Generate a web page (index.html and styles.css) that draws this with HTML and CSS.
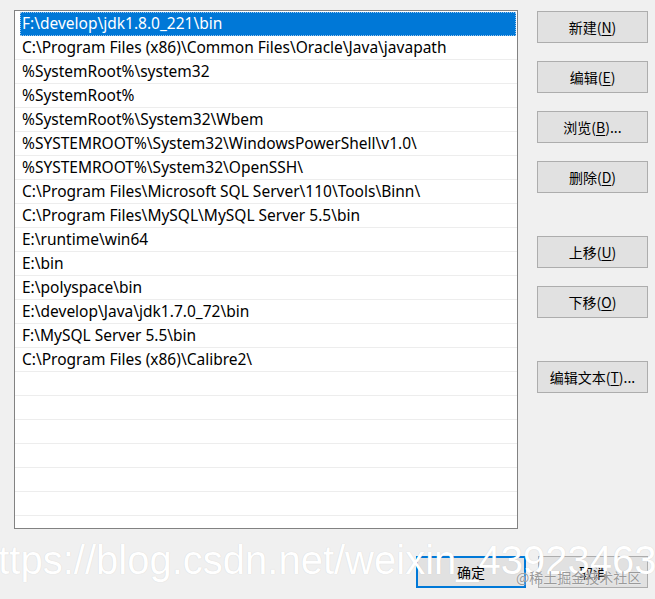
FILE: index.html
```html
<!DOCTYPE html>
<html lang="zh-CN">
  <head>
    <meta charset="UTF-8" />
    <title>编辑环境变量</title>
    <link rel="stylesheet" href="styles.css">
  </head>
  <body>
    <div class="dialog">
      <div class="main">
        <div class="path-list">
          <div class="path-item selected">F:\develop\jdk1.8.0_221\bin</div>
          <div class="path-item">C:\Program Files (x86)\Common Files\Oracle\Java\javapath</div>
          <div class="path-item">%SystemRoot%\system32</div>
          <div class="path-item">%SystemRoot%</div>
          <div class="path-item">%SystemRoot%\System32\Wbem</div>
          <div class="path-item">%SYSTEMROOT%\System32\WindowsPowerShell\v1.0\</div>
          <div class="path-item">%SYSTEMROOT%\System32\OpenSSH\</div>
          <div class="path-item">C:\Program Files\Microsoft SQL Server\110\Tools\Binn\</div>
          <div class="path-item">C:\Program Files\MySQL\MySQL Server 5.5\bin</div>
          <div class="path-item">E:\runtime\win64</div>
          <div class="path-item">E:\bin</div>
          <div class="path-item">E:\polyspace\bin</div>
          <div class="path-item">E:\develop\Java\jdk1.7.0_72\bin</div>
          <div class="path-item">F:\MySQL Server 5.5\bin</div>
          <div class="path-item">C:\Program Files (x86)\Calibre2\</div>
          <div class="path-item"></div>
          <div class="path-item"></div>
          <div class="path-item"></div>
          <div class="path-item"></div>
          <div class="path-item"></div>
          <div class="path-item"></div>
          <div class="path-item"></div>
        </div>
        <div class="side-buttons">
          <div class="btn">新建(<u>N</u>)</div>
          <div class="btn">编辑(<u>E</u>)</div>
          <div class="btn">浏览(<u>B</u>)...</div>
          <div class="btn">删除(<u>D</u>)</div>
          <div class="btn group-start">上移(<u>U</u>)</div>
          <div class="btn">下移(<u>O</u>)</div>
          <div class="btn group-start">编辑文本(<u>T</u>)...</div>
        </div>
      </div>
      <div class="footer">
        <div class="btn default">确定</div>
        <div class="btn">取消</div>
      </div>
    </div>
    <div class="watermark">https://blog.csdn.net/weixin_43923463</div>
    <div class="juejin-mark">@稀土掘金技术社区</div>
  </body>
</html>
```

FILE: styles.css
```css
* {
  padding: 0;
  margin: 0;
  box-sizing: border-box;
}
body {
  width: 655px;
  height: 599px;
  background-color: #f0f0f0;
  font-family: "Noto Sans", "Noto Sans CJK SC", sans-serif;
  color: #000;
  position: relative;
  overflow: hidden;
}
.dialog {
  padding: 10px 7px 0 14px;
}
.main {
  display: flex;
  gap: 19px;
}

.path-list {
  width: 504px;
  height: 519px;
  border: 1px solid #828282;
  background-color: #fff;
  padding-top: 1px;
  overflow: hidden;
}
.path-item {
  height: 24px;
  line-height: 23px;
  padding-left: 7px;
  font-size: 15.5px;
  border-bottom: 1px solid #ededed;
  white-space: nowrap;
}
.path-item.selected {
  margin: 0 1px 0 5px;
  padding-left: 2px;
  background-color: #0078d7;
  color: #fff;
  border-bottom: none;
  outline: 1px dotted #9cc6ec;
  outline-offset: -1px;
}

.side-buttons {
  display: flex;
  flex-direction: column;
  gap: 18px;
  padding-top: 1px;
}
.btn {
  width: 111px;
  height: 32px;
  background-color: #e1e1e1;
  border: 1px solid #adadad;
  font-family: "Noto Sans CJK SC", sans-serif;
  font-size: 14px;
  display: flex;
  align-items: center;
  justify-content: center;
  user-select: none;
}
.btn u {
  text-underline-offset: 2px;
}
.group-start {
  margin-top: 25px;
}

.footer {
  display: flex;
  justify-content: flex-end;
  gap: 12px;
  margin-top: 27px;
}
.footer .btn {
  width: 110px;
}
.footer .default {
  border: 2px solid #0078d7;
}

.watermark {
  position: absolute;
  left: -24px;
  top: 538px;
  font-family: "Liberation Sans", sans-serif;
  font-size: 40px;
  color: #fff;
  white-space: nowrap;
  text-shadow: 0 0 1px rgba(0, 0, 0, 0.15);
}
.juejin-mark {
  position: absolute;
  left: 516px;
  top: 567px;
  font-family: "Noto Sans CJK SC", sans-serif;
  font-size: 14px;
  color: #9a9a9a;
  white-space: nowrap;
  text-shadow: 0 0 2px #fff;
}
```
